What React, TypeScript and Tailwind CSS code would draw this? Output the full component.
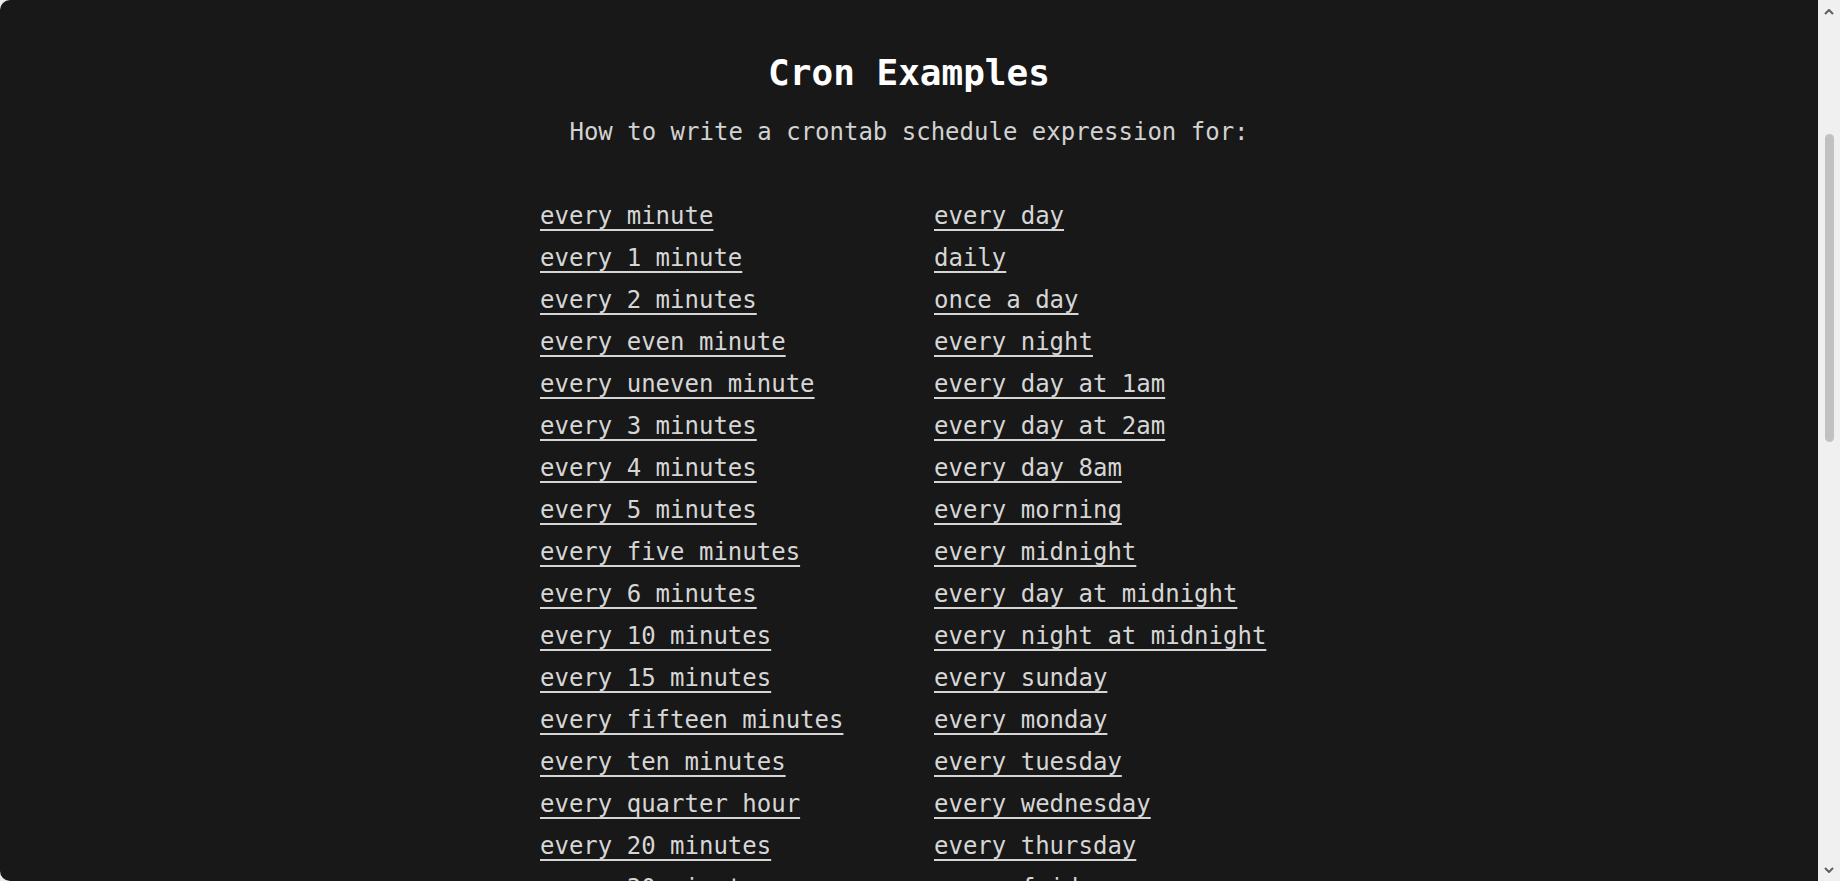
const left = [
  'every minute',
  'every 1 minute',
  'every 2 minutes',
  'every even minute',
  'every uneven minute',
  'every 3 minutes',
  'every 4 minutes',
  'every 5 minutes',
  'every five minutes',
  'every 6 minutes',
  'every 10 minutes',
  'every 15 minutes',
  'every fifteen minutes',
  'every ten minutes',
  'every quarter hour',
  'every 20 minutes',
  'every 30 minutes',
  'every hour',
]

const right = [
  'every day',
  'daily',
  'once a day',
  'every night',
  'every day at 1am',
  'every day at 2am',
  'every day 8am',
  'every morning',
  'every midnight',
  'every day at midnight',
  'every night at midnight',
  'every sunday',
  'every monday',
  'every tuesday',
  'every wednesday',
  'every thursday',
  'every friday',
  'every saturday',
]

function Column({ items }: { items: string[] }) {
  return (
    <ul className="flex flex-col">
      {items.map((item, i) => (
        <li key={i} className="h-[42px] leading-[42px]">
          <a href="#" className="text-[#d6d6d6] underline underline-offset-[5px] decoration-[1.5px]">
            {item}
          </a>
        </li>
      ))}
    </ul>
  )
}

export default function App() {
  return (
    <div className="flex h-[881px] w-full bg-[#e9edf1] overflow-hidden" style={{ fontFamily: '"DejaVu Sans Mono", "Liberation Mono", monospace' }}>
      <main className="flex-1 bg-[#181818] rounded-l-[10px] overflow-hidden">
        <div className="pt-[51px] flex flex-col items-center">
          <h1 className="text-[36px] leading-[44px] font-bold text-white">Cron Examples</h1>
          <p className="mt-[21px] text-[24px] leading-[32px] text-[#d2d2d2]">How to write a crontab schedule expression for:</p>
        </div>
        <div className="mx-auto mt-[47px] w-[738px] grid grid-cols-2 gap-x-[50px] text-[24px]">
          <Column items={left} />
          <Column items={right} />
        </div>
      </main>
      <div className="w-[22px] bg-[#f0f0f0] flex flex-col items-center">
        <svg width="10" height="6" viewBox="0 0 10 6" className="mt-[9px]">
          <path d="M1 5 L5 1 L9 5" stroke="#5f5f5f" strokeWidth="2" fill="none" />
        </svg>
        <div className="mt-[119px] w-[9px] h-[308px] rounded-full bg-[#c1c1c1]" />
        <div className="flex-1" />
        <svg width="10" height="6" viewBox="0 0 10 6" className="mb-[8px]">
          <path d="M1 1 L5 5 L9 1" stroke="#5f5f5f" strokeWidth="2" fill="none" />
        </svg>
      </div>
    </div>
  )
}
